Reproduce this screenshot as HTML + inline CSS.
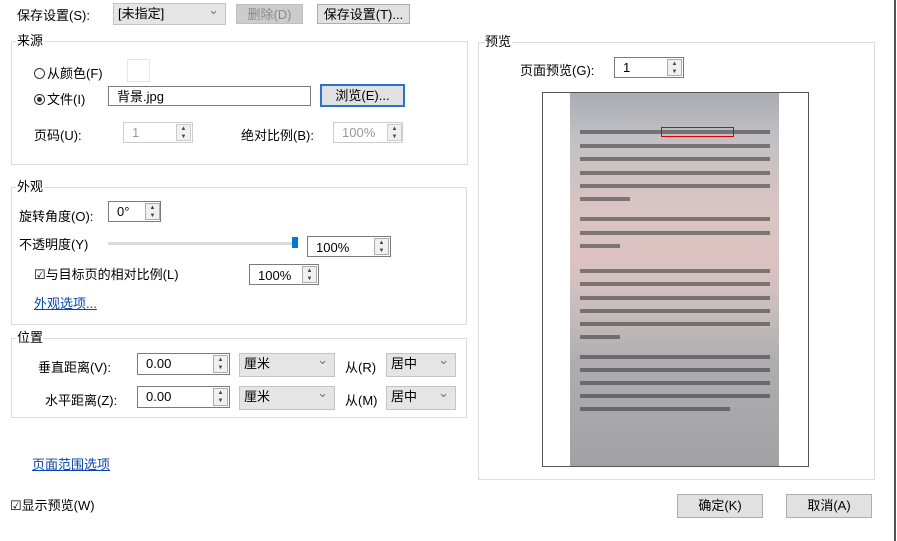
<!DOCTYPE html><html><head><meta charset="utf-8"><style>
body{margin:0;width:897px;height:541px;background:#fff;position:relative;overflow:hidden;font:13px "Liberation Sans","Noto Sans CJK SC",sans-serif;color:#000}
.a{position:absolute;white-space:nowrap}
.fs{position:absolute;border:1px solid #dcdcdc}
.lg{position:absolute;background:#fff;padding:0 1px;line-height:14px}
.inp{position:absolute;border:1px solid #7a7a7a;background:#fff;box-sizing:border-box;padding-left:8px;line-height:19px}
.dis{border-color:#ccc;color:#999}
.sp{position:absolute;width:15px;box-sizing:border-box;border:1px solid #adadad;background:#f0f0f0;font-size:6px;line-height:8px;text-align:center;color:#444}
.sel{position:absolute;border:1px solid #c4c4c4;background:#e5e5e5;box-sizing:border-box;padding-left:4px;line-height:20px}
.sel:after{content:"⌄";position:absolute;right:6px;top:-4px;color:#777}
.btn{position:absolute;border:1px solid #adadad;background:#e1e1e1;box-sizing:border-box;text-align:center;line-height:20px}
.ln{position:absolute;left:580px;height:4px;background:#333;opacity:.55}
.rad{display:inline-block;width:11px;height:11px;border:1px solid #333;border-radius:50%;vertical-align:-1px;margin-right:2px;box-sizing:border-box;position:relative}
.rad.on:after{content:"";position:absolute;left:2px;top:2px;width:5px;height:5px;border-radius:50%;background:#333}
</style></head><body>
<div class="a" style="left:17px;top:5px">保存设置(S):</div>
<div class="sel" style="left:113px;top:3px;width:113px;height:22px;background:#e5e5e5">[未指定]</div>
<div class="btn" style="left:236px;top:4px;width:67px;height:20px;background:#ccc;border-color:#bfbfbf;color:#8a8a8a">删除(D)</div>
<div class="btn" style="left:317px;top:4px;width:93px;height:20px">保存设置(T)...</div>

<div class="fs" style="left:11px;top:41px;width:455px;height:122px"></div>
<div class="lg" style="left:16px;top:34px">来源</div>
<div class="a" style="left:34px;top:63px"><span class="rad"></span>从颜色(F)</div>
<div class="a" style="left:127px;top:59px;width:21px;height:21px;border:1px solid #e5e5e5"></div>
<div class="a" style="left:34px;top:89px"><span class="rad on"></span>文件(I)</div>
<div class="inp" style="left:108px;top:86px;width:203px;height:20px">背景.jpg</div>
<div class="btn" style="left:320px;top:84px;width:85px;height:23px;border:2px solid #2a73c7;line-height:19px">浏览(E)...</div>
<div class="a" style="left:34px;top:125px">页码(U):</div>
<div class="inp dis" style="left:123px;top:122px;width:70px;height:21px">1</div>
<div class="sp" style="left:176px;top:124px;height:17px;border-color:#ccc">▲<br>▼</div>
<div class="a" style="left:241px;top:125px">绝对比例(B):</div>
<div class="inp dis" style="left:333px;top:122px;width:70px;height:21px">100%</div>
<div class="sp" style="left:387px;top:124px;height:17px;border-color:#ccc">▲<br>▼</div>

<div class="fs" style="left:11px;top:187px;width:454px;height:136px"></div>
<div class="lg" style="left:16px;top:180px">外观</div>
<div class="a" style="left:19px;top:206px">旋转角度(O):</div>
<div class="inp" style="left:108px;top:201px;width:53px;height:21px">0°</div>
<div class="sp" style="left:145px;top:203px;height:17px">▲<br>▼</div>
<div class="a" style="left:19px;top:234px">不透明度(Y)</div>
<div class="a" style="left:108px;top:242px;width:190px;height:3px;background:#dadada"></div>
<div class="a" style="left:292px;top:237px;width:6px;height:11px;background:#0078d7"></div>
<div class="inp" style="left:307px;top:236px;width:84px;height:21px;line-height:21px">100%</div>
<div class="sp" style="left:374px;top:238px;height:17px">▲<br>▼</div>
<div class="a" style="left:34px;top:264px">☑与目标页的相对比例(L)</div>
<div class="inp" style="left:249px;top:264px;width:70px;height:21px;line-height:21px">100%</div>
<div class="sp" style="left:302px;top:266px;height:17px">▲<br>▼</div>
<div class="a" style="left:34px;top:293px;color:#0645ad;text-decoration:underline">外观选项...</div>

<div class="fs" style="left:11px;top:338px;width:454px;height:78px"></div>
<div class="lg" style="left:16px;top:331px">位置</div>
<div class="a" style="left:38px;top:357px">垂直距离(V):</div>
<div class="inp" style="left:137px;top:353px;width:93px;height:22px">0.00</div>
<div class="sp" style="left:213px;top:355px;height:18px">▲<br>▼</div>
<div class="sel" style="left:239px;top:353px;width:96px;height:24px">厘米</div>
<div class="a" style="left:345px;top:357px">从(R)</div>
<div class="sel" style="left:386px;top:353px;width:70px;height:24px">居中</div>
<div class="a" style="left:45px;top:390px">水平距离(Z):</div>
<div class="inp" style="left:137px;top:386px;width:93px;height:22px">0.00</div>
<div class="sp" style="left:213px;top:388px;height:18px">▲<br>▼</div>
<div class="sel" style="left:239px;top:386px;width:96px;height:24px">厘米</div>
<div class="a" style="left:345px;top:390px">从(M)</div>
<div class="sel" style="left:386px;top:386px;width:70px;height:24px">居中</div>

<div class="a" style="left:32px;top:454px;color:#0645ad;text-decoration:underline">页面范围选项</div>
<div class="a" style="left:10px;top:495px">☑显示预览(W)</div>

<div class="fs" style="left:478px;top:42px;width:395px;height:436px"></div>
<div class="lg" style="left:484px;top:35px">预览</div>
<div class="a" style="left:520px;top:60px">页面预览(G):</div>
<div class="inp" style="left:614px;top:57px;width:70px;height:21px">1</div>
<div class="sp" style="left:667px;top:59px;height:17px">▲<br>▼</div>
<div class="a" style="left:542px;top:92px;width:265px;height:373px;border:1px solid #555;background:#fff"></div>
<div class="a" style="left:570px;top:93px;width:209px;height:373px;background:linear-gradient(#a9acb3 0%,#c2c0c4 12%,#d9c4c4 30%,#dcc3c2 45%,#c8bdbd 58%,#aeadb0 72%,#a2a2a5 100%)"></div>
<div class="ln" style="top:130px;width:190px"></div>
<div class="ln" style="top:144px;width:190px"></div>
<div class="ln" style="top:157px;width:190px"></div>
<div class="ln" style="top:171px;width:190px"></div>
<div class="ln" style="top:184px;width:190px"></div>
<div class="ln" style="top:197px;width:50px"></div>
<div class="ln" style="top:217px;width:190px"></div>
<div class="ln" style="top:231px;width:190px"></div>
<div class="ln" style="top:244px;width:40px"></div>
<div class="ln" style="top:269px;width:190px"></div>
<div class="ln" style="top:282px;width:190px"></div>
<div class="ln" style="top:296px;width:190px"></div>
<div class="ln" style="top:309px;width:190px"></div>
<div class="ln" style="top:322px;width:190px"></div>
<div class="ln" style="top:335px;width:40px"></div>
<div class="ln" style="top:355px;width:190px"></div>
<div class="ln" style="top:368px;width:190px"></div>
<div class="ln" style="top:381px;width:190px"></div>
<div class="ln" style="top:394px;width:190px"></div>
<div class="ln" style="top:407px;width:150px"></div>
<div class="a" style="left:661px;top:127px;width:71px;height:8px;border:1px solid #d00"></div>
<div class="btn" style="left:677px;top:494px;width:86px;height:24px;line-height:22px">确定(K)</div>
<div class="btn" style="left:786px;top:494px;width:86px;height:24px;line-height:22px">取消(A)</div>
<div class="a" style="left:894px;top:0;width:2px;height:541px;background:#555"></div>
</body></html>
